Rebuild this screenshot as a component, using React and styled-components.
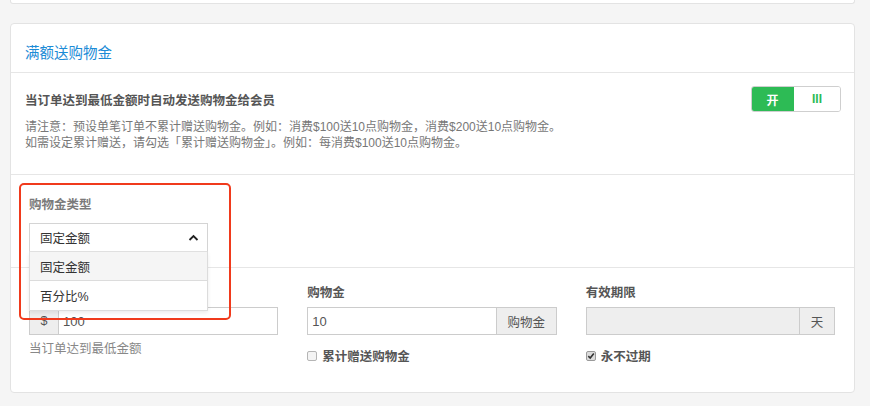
import styled, { createGlobalStyle } from "styled-components";

const GlobalStyle = createGlobalStyle`
  html, body {
    margin: 0;
    padding: 0;
    background: #f5f5f5;
  }
  body {
    font-family: "Liberation Sans", "Noto Sans CJK SC", sans-serif;
    color: #555;
  }
  * { box-sizing: border-box; }
`;

const Page = styled.div`
  width: 870px;
  height: 406px;
  padding: 0 15px 0 10px;
  overflow: hidden;
`;

const PrevCard = styled.div`
  height: 4px;
  background: #fff;
  border: 1px solid #e3e3e3;
  border-top: none;
  border-radius: 0 0 3px 3px;
`;

const Card = styled.section`
  margin-top: 19px;
  background: #fff;
  border: 1px solid #e3e3e3;
  border-radius: 4px;
`;

const Header = styled.header`
  padding: 19px 14px 9px;
  border-bottom: 1px solid #e6e6e6;
`;

const Title = styled.h2`
  margin: 0;
  font-size: 14.5px;
  line-height: 20px;
  font-weight: 400;
  color: #1c8bd6;
`;

const Section = styled.div`
  position: relative;
  z-index: ${(p) => p.$z || 0};
  padding: ${(p) => p.$pad};
  border-bottom: ${(p) => (p.$last ? "none" : "1px solid #e6e6e6")};
`;

const SettingRow = styled.div`
  display: flex;
  align-items: center;
  justify-content: space-between;
`;

const SettingTitle = styled.div`
  font-size: 12.5px;
  font-weight: 700;
  color: #555;
`;

const Notice = styled.p`
  margin: 7px 0 0;
  font-size: 12px;
  line-height: 16px;
  color: #777;
`;

const Toggle = styled.div`
  display: flex;
  width: 90px;
  height: 26px;
  border: 1px solid #cfcfcf;
  border-radius: 3px;
  overflow: hidden;
`;

const ToggleSide = styled.div`
  flex: ${(p) => (p.$on ? "0 0 43px" : "1")};
  display: flex;
  align-items: center;
  justify-content: center;
  background: ${(p) => (p.$on ? "#2dbb55" : "#fff")};
  color: ${(p) => (p.$on ? "#fff" : "#2dbb55")};
  font-size: 12px;
  font-weight: 700;
  margin: ${(p) => (p.$on ? "-1px 0 -1px -1px" : "0")};
`;

const FieldLabel = styled.div`
  height: 17px;
  font-size: 12.5px;
  line-height: 17px;
  font-weight: 700;
  color: ${(p) => (p.$muted ? "#7a7a7a" : "#555")};
  margin-bottom: ${(p) => p.$gap || "5px"};
`;

const SelectWrap = styled.div`
  position: relative;
  width: 179px;
`;

const SelectBox = styled.div`
  display: flex;
  align-items: center;
  justify-content: space-between;
  height: 29px;
  padding: 0 8px 0 10px;
  border: 1px solid #d4d4d4;
  border-bottom-color: #e2e2e2;
  font-size: 12.5px;
  color: #333;
  background: #fff;
`;

const Menu = styled.ul`
  position: absolute;
  top: 29px;
  left: 0;
  right: 0;
  margin: 0;
  padding: 0;
  list-style: none;
  background: #fff;
  border: 1px solid #dcdcdc;
  border-top: none;
  box-shadow: 0 2px 4px rgba(0, 0, 0, 0.08);
`;

const MenuItem = styled.li`
  height: 29px;
  display: flex;
  align-items: center;
  padding-left: 10px;
  font-size: 12.5px;
  color: #333;
  background: ${(p) => (p.$active ? "#f5f5f5" : "#fff")};
  border-bottom: ${(p) => (p.$active ? "1px solid #dcdcdc" : "none")};
`;

const Highlight = styled.div`
  position: absolute;
  top: 8px;
  left: 8px;
  width: 212px;
  height: 137px;
  border: 2.5px solid #f03a1c;
  border-radius: 5px;
  pointer-events: none;
`;

const Columns = styled.div`
  display: grid;
  grid-template-columns: repeat(3, 1fr);
  column-gap: 29px;
`;

const InputGroup = styled.div`
  display: flex;
  height: 28px;
`;

const Addon = styled.div`
  flex: 0 0 ${(p) => p.$w};
  display: flex;
  align-items: center;
  justify-content: center;
  background: #eee;
  border: 1px solid #ccc;
  margin-left: ${(p) => (p.$right ? "-1px" : "0")};
  margin-right: ${(p) => (p.$right ? "0" : "-1px")};
  font-size: 12.5px;
  color: #555;
`;

const Input = styled.div`
  flex: 1;
  display: flex;
  align-items: center;
  padding: 0 4px;
  border: 1px solid #ccc;
  background: ${(p) => (p.$disabled ? "#eee" : "#fff")};
  font-size: 13px;
  color: #555;
`;

const Help = styled.div`
  margin-top: 3px;
  font-size: 12.5px;
  color: #888;
`;

const CheckRow = styled.label`
  display: flex;
  align-items: center;
  gap: 5px;
  margin-top: 11px;
  font-size: 12.5px;
  font-weight: 700;
  color: #555;
`;

const Box = styled.span`
  width: 10px;
  height: 10px;
  border: 1px solid ${(p) => (p.$checked ? "#9a9a9a" : "#b5b5b5")};
  border-radius: 2px;
  background: ${(p) => (p.$checked ? "#dcdcdc" : "#f4f4f4")};
  display: flex;
  align-items: center;
  justify-content: center;
`;

const Checkbox = ({ checked, children }) => (
  <CheckRow>
    <Box $checked={checked}>
      {checked && (
        <svg width="8" height="8" viewBox="0 0 8 8">
          <polyline points="1.3,4.2 3.2,6 6.8,1.6" fill="none" stroke="#333" strokeWidth="1.6" />
        </svg>
      )}
    </Box>
    {children}
  </CheckRow>
);

const Chevron = () => (
  <svg width="11" height="7" viewBox="0 0 11 7">
    <polyline points="1.5,6 5.5,2 9.5,6" fill="none" stroke="#222" strokeWidth="1.8" />
  </svg>
);

const App = () => {
  return (
    <Page>
      <GlobalStyle />
      <PrevCard />
      <Card>
        <Header>
          <Title>满额送购物金</Title>
        </Header>

        <Section $pad="13px 13px 23px 14px">
          <SettingRow>
            <SettingTitle>当订单达到最低金额时自动发送购物金给会员</SettingTitle>
            <Toggle>
              <ToggleSide $on>开</ToggleSide>
              <ToggleSide>III</ToggleSide>
            </Toggle>
          </SettingRow>
          <Notice>
            请注意：预设单笔订单不累计赠送购物金。例如：消费$100送10点购物金，消费$200送10点购物金。
            <br />
            如需设定累计赠送，请勾选「累计赠送购物金」。例如：每消费$100送10点购物金。
          </Notice>
        </Section>

        <Section $pad="22px 18px 15px" $z={2}>
          <FieldLabel $muted $gap="9px">购物金类型</FieldLabel>
          <SelectWrap>
            <SelectBox>
              固定金额
              <Chevron />
            </SelectBox>
            <Menu>
              <MenuItem $active>固定金额</MenuItem>
              <MenuItem>百分比%</MenuItem>
            </Menu>
          </SelectWrap>
          <Highlight />
        </Section>

        <Section $pad="17px 19px 27px 18px" $last>
          <Columns>
            <div>
              {/* label sits under the open menu */}
              <FieldLabel />
              <InputGroup>
                <Addon $w="30px">$</Addon>
                <Input>100</Input>
              </InputGroup>
              <Help>当订单达到最低金额</Help>
            </div>
            <div>
              <FieldLabel>购物金</FieldLabel>
              <InputGroup>
                <Input>10</Input>
                <Addon $w="61px" $right>购物金</Addon>
              </InputGroup>
              <Checkbox>累计赠送购物金</Checkbox>
            </div>
            <div>
              <FieldLabel>有效期限</FieldLabel>
              <InputGroup>
                <Input $disabled />
                <Addon $w="36px" $right>天</Addon>
              </InputGroup>
              <Checkbox checked>永不过期</Checkbox>
            </div>
          </Columns>
        </Section>
      </Card>
    </Page>
  );
};

export default App;
